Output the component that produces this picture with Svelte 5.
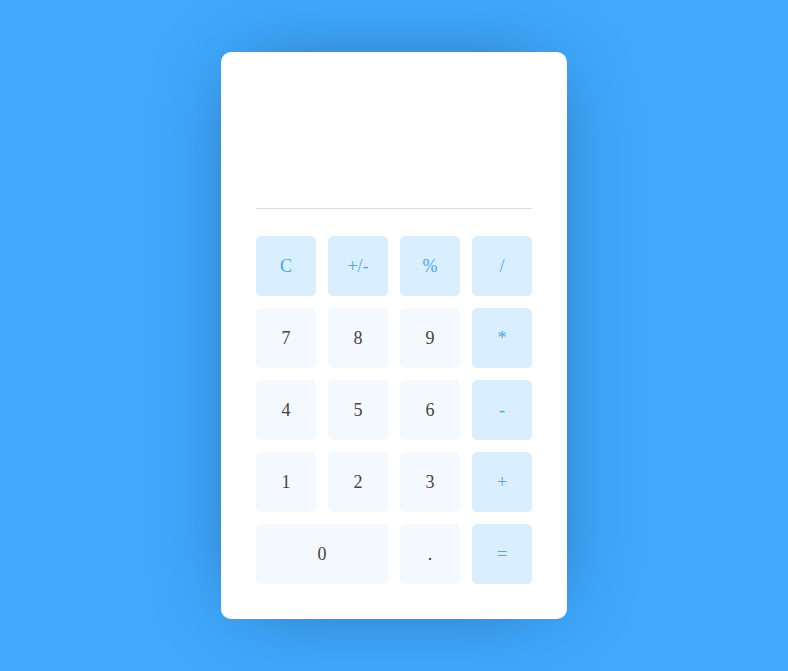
<script>
  const keys = [
    { label: 'C', kind: 'op' }, { label: '+/-', kind: 'op' }, { label: '%', kind: 'op' }, { label: '/', kind: 'op' },
    { label: '7' }, { label: '8' }, { label: '9' }, { label: '*', kind: 'op' },
    { label: '4' }, { label: '5' }, { label: '6' }, { label: '-', kind: 'op' },
    { label: '1' }, { label: '2' }, { label: '3' }, { label: '+', kind: 'op' },
    { label: '0', wide: true }, { label: '.' }, { label: '=', kind: 'op' }
  ];

  let display = $state('');
  let stored = null;
  let pending = null;
  let fresh = false;

  function compute(a, b, op) {
    if (op === '+') return a + b;
    if (op === '-') return a - b;
    if (op === '*') return a * b;
    return a / b;
  }

  function press(key) {
    if (key === 'C') {
      display = '';
      stored = null;
      pending = null;
    } else if (key === '+/-') {
      if (display) display = String(-Number(display));
    } else if (key === '%') {
      if (display) display = String(Number(display) / 100);
    } else if (/[0-9.]/.test(key)) {
      if (fresh) display = '';
      fresh = false;
      if (key !== '.' || !display.includes('.')) display += key;
    } else if (display) {
      if (pending && !fresh) display = String(compute(stored, Number(display), pending));
      stored = Number(display);
      pending = key === '=' ? null : key;
      fresh = true;
    }
  }
</script>

<main>
  <section class="calculator" aria-label="Calculator">
    <output class="display" aria-label="Result">{display}</output>
    <div class="keys">
      {#each keys as key}
        <button type="button" class:op={key.kind === 'op'} class:wide={key.wide} onclick={() => press(key.label)}>{key.label}</button>
      {/each}
    </div>
  </section>
</main>

<style>
  :global(body) {
    margin: 0;
    background: #3fa9fe;
  }

  main {
    min-height: 100vh;
    box-sizing: border-box;
    display: flex;
    align-items: center;
    justify-content: center;
    overflow: hidden;
    font-family: "Liberation Serif", "Times New Roman", serif;
  }

  .calculator {
    padding: 35px;
    border-radius: 10px;
    background: #fff;
    box-shadow: 0 0 80px -20px rgba(0, 0, 0, 0.4);
  }

  .display {
    display: flex;
    align-items: flex-end;
    justify-content: flex-end;
    box-sizing: border-box;
    height: 122px;
    padding: 12px 0;
    margin-bottom: 27px;
    border-bottom: 1px solid #ddd;
    color: #444;
    font-size: 40px;
    overflow: hidden;
  }

  .keys {
    display: grid;
    grid-template-columns: repeat(4, 60px);
    grid-auto-rows: 60px;
    gap: 12px;
  }

  button {
    padding: 0;
    border: 0;
    border-radius: 5px;
    background: #f4f9ff;
    color: #444;
    font-family: inherit;
    font-size: 18px;
    cursor: pointer;
  }

  .op {
    background: #d9eeff;
    color: #3fa9fe;
  }

  .wide {
    grid-column: span 2;
  }
</style>
